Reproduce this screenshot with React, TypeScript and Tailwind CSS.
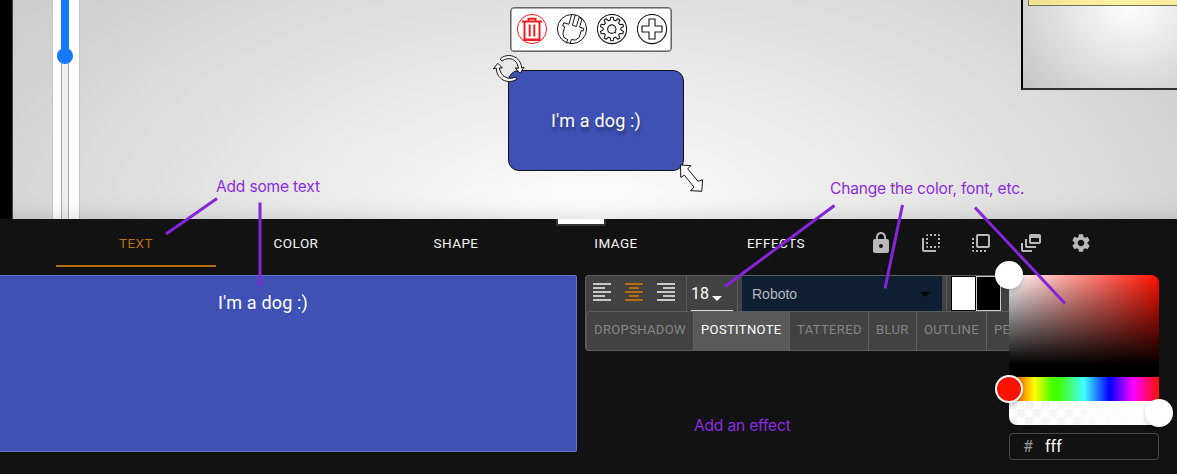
import React from 'react';
import {
  MdLock,
  MdFlipToBack,
  MdFlipToFront,
  MdDynamicFeed,
  MdSettings,
  MdFormatAlignLeft,
  MdFormatAlignCenter,
  MdFormatAlignRight,
  MdArrowDropDown,
} from 'react-icons/md';

const tabs = ['TEXT', 'COLOR', 'SHAPE', 'IMAGE', 'EFFECTS'];

const effects = [
  { name: 'DROPSHADOW', width: 'w-[107px]' },
  { name: 'POSTITNOTE', width: 'w-[96px]' },
  { name: 'TATTERED', width: 'w-[79px]' },
  { name: 'BLUR', width: 'w-[48px]' },
  { name: 'OUTLINE', width: 'w-[70px]' },
  { name: 'PE', width: 'w-[70px]' },
];

function gearPath(teeth: number, outer: number, inner: number) {
  const points: string[] = [];
  for (let i = 0; i < teeth; i++) {
    const step = (Math.PI * 2) / teeth;
    const a = i * step - Math.PI / 2;
    const add = (r: number, t: number) =>
      points.push(`${(15.5 + r * Math.cos(t)).toFixed(2)} ${(15.5 + r * Math.sin(t)).toFixed(2)}`);
    add(inner, a - step * 0.34);
    add(outer, a - step * 0.17);
    add(outer, a + step * 0.17);
    add(inner, a + step * 0.34);
  }
  return `M${points.join('L')}Z`;
}

function NodeToolbar() {
  return (
    <div className="absolute left-[510px] top-[7px] flex h-[45px] w-[162px] items-center gap-[9px] rounded-[4px] border border-[#666] bg-white pl-[5.500px] shadow-[inset_0_0_0_0.5px_#555]">
      <svg width="31" height="31" viewBox="0.5 0.5 31 31" fill="none" stroke="#f41d20" className="shrink-0">
        <circle cx="15.5" cy="15.5" r="14.6" />
        <path d="M5.500 8h20M12 7.500v-2.200h7v2.200M8 8.500v17.500h15v-17.500" strokeWidth="2" />
        <path d="M7 26.500h17M13.200 11v12M17.800 11v12" strokeWidth="2" />
      </svg>
      <svg width="31" height="31" viewBox="0.5 0.5 31 31" fill="none" stroke="#151515" strokeWidth="1" className="shrink-0">
        <circle cx="15.5" cy="15.5" r="14.6" />
        <path d="M12.400 10.800L15.200 1M15.900 11.800L18.700 1.500M19.900 12.900L22.500 4l3 1.400-2.400 8.300" />
        <path d="M15.900 11.800l4 1.100M12.400 10.800L7.200 9.300l-1 3.200 2 .8L6.400 20l1 4 3.700 2-1.300 3.800M13.600 29.800l1.400-3.800 3.700.6 4-2.600 2-6.800 1.800.4 1-2.600-4.400-1.300" />
      </svg>
      <svg width="31" height="31" viewBox="0.5 0.5 31 31" fill="none" stroke="#151515" strokeWidth="1.100" className="shrink-0">
        <circle cx="15.5" cy="15.5" r="14.6" />
        <path d={gearPath(10, 11.8, 8.9)} strokeLinejoin="round" />
        <path d="M18.600 18.200a4.200 4.200 0 1 0-1.500 1.200M17.100 18.400l2.400 1" />
      </svg>
      <svg width="31" height="31" viewBox="0.5 0.5 31 31" fill="none" stroke="#151515" strokeWidth="1.100" className="shrink-0">
        <circle cx="15.5" cy="15.5" r="14.6" />
        <path d="M12.500 5.500h6v7h7v6h-7v7h-6v-7h-7v-6h7z" />
      </svg>
    </div>
  );
}

function Minimap() {
  return (
    <div className="absolute left-[1021px] top-[-60px] h-[150px] w-[156px] overflow-hidden border-b-2 border-l-2 border-b-[#302d2f] border-l-black bg-[radial-gradient(110px_100px_at_108px_62px,#ffffff_0%,#c6c6c6_125%)]">
      <div className="ml-[5px] h-[66px] w-[180px] border border-[#777050] bg-[radial-gradient(circle_at_98px_60px,#fff3a4,#eee08e_110px)]" />
    </div>
  );
}

function Canvas() {
  return (
    <div className="relative h-[219px] overflow-hidden bg-[radial-gradient(720px_370px_at_590px_225px,#ffffff_0%,#cccccc_100%)]">
      <div className="flex h-full">
        <div className="w-[13px] border-r border-[#444] bg-black" />
        <div className="ml-[39px] flex w-[28px] border-x border-[#c8c8c8] bg-white pl-[8px]">
          <div className="relative w-[8px] border-x border-[#aaa] bg-[#efefef]">
            <div className="-mx-px h-[56px] w-[8px] bg-[#1677ff]" />
            <div className="absolute left-[-5px] top-[48px] size-[16px] rounded-full bg-[#1677ff]" />
          </div>
        </div>
      </div>
      <div className="absolute bottom-0 left-[13px] right-0 h-[24px] bg-linear-to-b from-transparent via-black/2 to-black/8" />
      <NodeToolbar />
      <div className="absolute left-[508px] top-[70px] flex h-[101px] w-[176px] items-center justify-center rounded-[11px] border border-[#111] bg-[#3f51b5]">
        <span className="whitespace-nowrap text-[18px] tracking-[0.170px] text-white [text-shadow:1px_4px_3px_rgba(0,0,0,0.35)]">I'm a dog :)</span>
      </div>
      <svg className="absolute left-[490px] top-[50px]" width="40" height="36" viewBox="0 0 40 36" fill="#fff" stroke="#111" strokeWidth="1" strokeLinejoin="round">
        <path d="M10.200 9c7-7 21-3 21.300 9l2.500-.8-3.800 6-5-5.200 3.200.4c-.5-9.500-10-12.500-16.400-7.300z" />
        <path d="M3.300 18.800l4.500-5.500 4.600 4.700-3-.2c.8 8 8.300 13.100 16.200 9.200l1.200 2.300c-9.500 5.700-20.600-.4-20.500-11.300z" />
      </svg>
      <svg className="absolute left-[674px] top-[160px]" width="34" height="36" viewBox="0 0 34 36" fill="#fff" stroke="#111" strokeWidth="1">
        <path d="M6.500 5l10.400.6-3.200 3.300 10.300 12.400 4.500-1.500-.7 11.500-11.300-.7 3.600-3.400-9.700-12-3.600 2.200z" />
      </svg>
      <Minimap />
    </div>
  );
}

function Toolbar() {
  return (
    <div className="flex h-[57px]">
      <div className="ml-[56px] flex h-[48px] text-[13.500px] tracking-[0.450px] text-[#f4f4f4]">
        {tabs.map((tab, i) => (
          <div
            key={tab}
            className={
              i === 0
                ? 'flex w-[160px] items-center justify-center border-b-2 border-[#b86c0e] pt-[2px] text-[#b86c0e]'
                : 'flex w-[160px] items-center justify-center border-b-2 border-transparent pt-[2px]'
            }
          >
            {tab}
          </div>
        ))}
      </div>
      <div className="flex h-[48px] items-center text-[#b9b9b9]">
        {[MdLock, MdFlipToBack, MdFlipToFront, MdDynamicFeed, MdSettings].map((Icon, i) => (
          <div key={i} className="flex w-[50px] justify-center">
            <Icon size={i === 4 ? 22 : 24} />
          </div>
        ))}
      </div>
    </div>
  );
}

function FormatBar() {
  return (
    <div className="ml-[8px] h-[76px] w-[424px] overflow-hidden rounded-l-[4px] border border-r-0 border-[#5c5c5c] bg-[#424242]">
      <div className="flex h-[35px]">
        <div className="flex w-[101px] justify-between border-r border-[#5c5c5c] pl-[4px] pr-[8px] pt-[4px] text-[#c8c8c8]">
          <MdFormatAlignLeft size={24} />
          <MdFormatAlignCenter size={24} className="text-[#b86c0e]" />
          <MdFormatAlignRight size={24} />
        </div>
        <div className="flex w-[51px] border-r border-[#5c5c5c] pl-[4px]">
          <div className="flex w-[42px] border-b border-[#ddd] text-[16px] text-white">
            <span className="pt-[6px]">18</span>
            <MdArrowDropDown size={24} className="-ml-[4px] mt-[10px]" />
          </div>
        </div>
        <div className="ml-[4px] flex w-[200px] items-center bg-[#0f1f33] pl-[10px] text-[14px] text-[#b4b9bf]">
          <span className="pt-[2px] font-['Liberation_Sans',sans-serif]">Roboto</span>
          <MdArrowDropDown size={24} className="ml-auto mr-[5px] text-black" />
        </div>
        <div className="ml-[4px] flex border-l border-[#5c5c5c] pl-[4px]">
          <div className="w-[25px] border border-black bg-white" />
          <div className="w-[25px] border border-[#ccc] bg-black" />
        </div>
      </div>
      <div className="flex h-[40px] w-[520px] rounded-[4px] border border-[#5c5c5c] text-[13px] tracking-[0.370px] text-[#858585]">
        {effects.map((effect, i) => (
          <div
            key={effect.name}
            className={`${effect.width} flex shrink-0 border-r border-[#616161] pl-[7px] pt-[8px] ${i === 1 ? 'bg-[#595959] text-white' : ''}`}
          >
            {effect.name}
          </div>
        ))}
      </div>
    </div>
  );
}

function ColorPicker() {
  return (
    <div className="w-[150px]">
      <div className="relative h-[102px] rounded-t-[8px] border-b-[12px] border-black bg-[linear-gradient(to_top,#000,transparent),linear-gradient(to_right,#fff,transparent)] bg-[#ff1100]">
        <div className="absolute -left-[14px] -top-[14px] size-[28px] rounded-full border-2 border-white bg-white shadow-[0_2px_4px_rgba(0,0,0,0.2)]" />
      </div>
      <div className="relative h-[24px] bg-[linear-gradient(to_right,#ff1200_0%,#ffff00_17%,#40ff00_29%,#40ff00_33%,#40ffff_50%,#0000ff_67%,#ff00ff_83%,#ff1200_100%)]">
        <div className="absolute -left-[14px] -top-[2px] z-10 size-[28px] rounded-full border-2 border-white bg-[#ff1200] shadow-[0_2px_4px_rgba(0,0,0,0.2)]" />
      </div>
      <div className="relative h-[24px] rounded-b-[8px] bg-[linear-gradient(to_right,transparent,#fff),repeating-conic-gradient(#fff_0_25%,#f2f2f2_0_50%)] bg-[size:100%_100%,16px_16px]">
        <div className="absolute -right-[14px] -top-[2px] size-[28px] rounded-full bg-white shadow-[0_2px_4px_rgba(0,0,0,0.2)]" />
      </div>
      <div className="mt-[8px] flex h-[27px] items-center rounded-[4px] border border-[#484848] pl-[13px] text-[16px]">
        <span className="w-[22px] text-[#999]">#</span>
        <span className="text-white">fff</span>
      </div>
    </div>
  );
}

function Annotations() {
  return (
    <div className="pointer-events-none absolute inset-0 z-20 whitespace-nowrap font-[Inter,sans-serif] text-[15.500px] leading-[20px] tracking-[-0.160px] text-[#8c2be2]">
      <svg className="absolute inset-0" width="1177" height="474" stroke="#8524d8" strokeWidth="3">
        <path d="M217 198.500L166 234M260 202.500V286M834.500 205.500L725 286.500M902.500 205L885 288.500M975 207.500L1065 303.500" />
      </svg>
      <span className="absolute left-[216px] top-[177px]">Add some text</span>
      <span className="absolute left-[830px] top-[179px]">Change the color, font, etc.</span>
      <span className="absolute left-[694px] top-[416px]">Add an effect</span>
    </div>
  );
}

export default function App() {
  return (
    <div className="relative h-[474px] w-[1177px] overflow-hidden bg-[#121212] font-[Roboto,sans-serif]">
      <Canvas />
      <div className="relative h-[255px]">
        <div className="absolute left-[556px] top-0 h-[7px] w-[50px] border-2 border-t-0 border-[#333] bg-white" />
        <Toolbar />
        <div className="-mt-px flex items-start">
          <div className="h-[177px] w-[577px] rounded-r-[2px] border border-l-0 border-[#6674c6] bg-[#3f51b5] pt-[13px] text-[18px] tracking-[0.170px] text-white">
            <div className="w-[526px] text-center">I'm a dog :)</div>
          </div>
          <FormatBar />
          <ColorPicker />
        </div>
      </div>
      <Annotations />
    </div>
  );
}
